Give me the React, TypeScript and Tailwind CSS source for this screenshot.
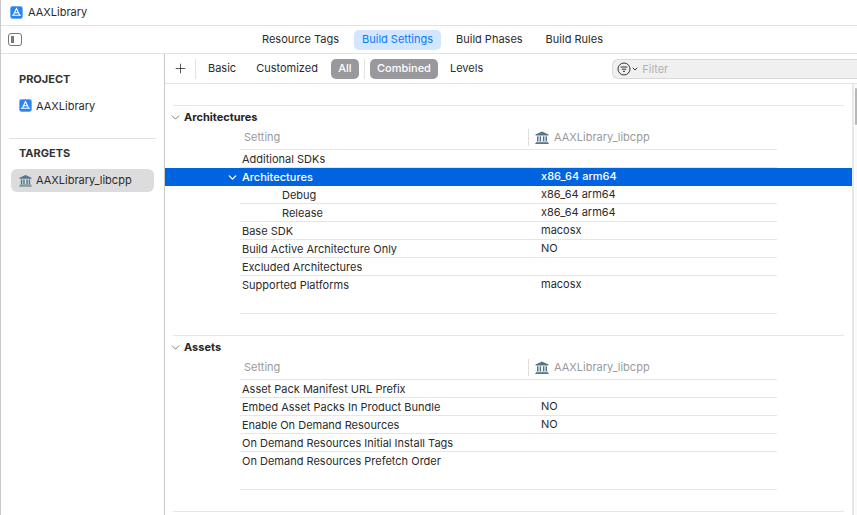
import { ChevronDown, Plus } from 'lucide-react';

const AppIcon = ({ className = '' }: { className?: string }) => (
  <svg viewBox="0 0 14 14" className={className}>
    <rect x="0.4" y="0.4" width="13.2" height="13.2" rx="2.6" fill="#2a83f0" stroke="#6fb2fb" strokeWidth="0.8" />
    <path d="M7 2.6 L3.6 10 M7 2.6 L10.4 10 M2.6 10 H11.4 M5.2 7.2 H8.8" stroke="#fff" strokeWidth="1.2" fill="none" strokeLinecap="round" />
  </svg>
);

const BankIcon = ({ className = '' }: { className?: string }) => (
  <svg viewBox="0 0 14 13" className={className} fill="#557689">
    <path d="M7 0.5 L13.5 3.6 V4.6 H0.5 V3.6 Z" />
    <rect x="2" y="5.3" width="1.5" height="5" />
    <rect x="4.6" y="5.3" width="1.5" height="5" />
    <rect x="7.9" y="5.3" width="1.5" height="5" />
    <rect x="10.5" y="5.3" width="1.5" height="5" />
    <rect x="1" y="10.8" width="12" height="1" />
    <rect x="0.3" y="12" width="13.4" height="1" />
  </svg>
);

interface Row {
  label: string;
  value?: string;
  indent?: boolean;
  selected?: boolean;
  last?: boolean;
}

const architectures: Row[] = [
  { label: 'Additional SDKs' },
  { label: 'Architectures', value: 'x86_64 arm64', selected: true },
  { label: 'Debug', value: 'x86_64 arm64', indent: true },
  { label: 'Release', value: 'x86_64 arm64', indent: true },
  { label: 'Base SDK', value: 'macosx' },
  { label: 'Build Active Architecture Only', value: 'NO' },
  { label: 'Excluded Architectures' },
  { label: 'Supported Platforms', value: 'macosx', last: true },
];

const assets: Row[] = [
  { label: 'Asset Pack Manifest URL Prefix' },
  { label: 'Embed Asset Packs In Product Bundle', value: 'NO' },
  { label: 'Enable On Demand Resources', value: 'NO' },
  { label: 'On Demand Resources Initial Install Tags' },
  { label: 'On Demand Resources Prefetch Order', last: true },
];

function SettingRow({ row }: { row: Row }) {
  if (row.selected) {
    return (
      <div className="flex h-[18px] items-center bg-[#0064e1] font-medium text-white">
        <div className="flex w-[75px] justify-end pr-[1px]">
          <ChevronDown className="h-[13px] w-[13px]" strokeWidth={2.5} />
        </div>
        <div className="w-[301px] pl-[2px]">{row.label}</div>
        <div className="mb-[2px]">{row.value}</div>
      </div>
    );
  }
  return (
    <div className={`ml-[75px] flex h-[18px] w-[537px] items-center border-b pt-[1px] text-[#2b2b2b] ${row.last ? 'border-transparent' : 'border-[#e6e6e6]'}`}>
      <div className={row.indent ? 'w-[301px] pl-[42px]' : 'w-[301px] pl-[2px]'}>{row.label}</div>
      <div className="mb-[2px]">{row.value}</div>
    </div>
  );
}

function Section({ title, rows }: { title: string; rows: Row[] }) {
  return (
    <section className="mb-[21px]">
      <div className="mx-[8px] flex h-[24px] items-center border-t border-[#e6e6e6]">
        <ChevronDown className="ml-[-4px] h-[13px] w-[13px] text-[#666666]" strokeWidth={1.6} />
        <span className="ml-[2px] font-bold text-[#262626]">{title}</span>
      </div>
      <div className="ml-[75px] flex h-[21px] w-[537px] items-start border-b border-[#e6e6e6] text-[#9a9a9a]">
        <div className="w-[288px] pl-[4px]">Setting</div>
        <div className="flex h-[17px] items-center gap-[5px] border-l border-[#dedede] pl-[6px]">
          <BankIcon className="h-[13px] w-[14px]" />
          <span>AAXLibrary_libcpp</span>
        </div>
      </div>
      {rows.map((row) => (
        <SettingRow key={row.label} row={row} />
      ))}
      <div className="ml-[75px] h-[20px] w-[537px] border-b border-[#e6e6e6]" />
    </section>
  );
}

export default function App() {
  return (
    <div className="flex h-[515px] w-[857px] flex-col overflow-hidden border-l border-[#c9c9c9] bg-white font-['Inter',sans-serif] text-[11px] text-[#2b2b2b]">
      <div className="flex h-[26px] shrink-0 items-center gap-[5px] border-b border-[#e2e2e2] pl-[9px]">
        <AppIcon className="h-[13px] w-[13px]" />
        <span>AAXLibrary</span>
      </div>

      <div className="flex h-[28px] shrink-0 items-center border-b border-[#e2e2e2]">
        <div className="ml-[7px] flex h-[13px] w-[14px] rounded-[3px] border border-[#777777]">
          <div className="ml-[2px] my-[2px] w-[3px] bg-[#777777]" />
        </div>
        <div className="ml-[233px] flex items-center gap-[8px]">
          <span className="px-[7px]">Resource Tags</span>
          <span className="flex h-[20px] w-[87px] items-center justify-center rounded-[5px] bg-[#d2e7ff] text-[#0a7aff]">Build Settings</span>
          <span className="px-[7px]">Build Phases</span>
          <span className="ml-[1px] px-[7px]">Build Rules</span>
        </div>
      </div>

      <div className="flex min-h-0 flex-1">
        <aside className="w-[164px] shrink-0 border-r border-[#c9c9c9] pt-[17px]">
          <div className="pl-[18px] font-bold text-[#333333]">PROJECT</div>
          <div className="mt-[10px] flex items-center gap-[4px] pl-[18px]">
            <AppIcon className="h-[13px] w-[13px]" />
            <span>AAXLibrary</span>
          </div>
          <div className="mx-[8px] mt-[24px] border-t border-[#e2e2e2]" />
          <div className="mt-[6px] pl-[18px] font-bold text-[#333333]">TARGETS</div>
          <div className="mx-[10px] mt-[7px] flex h-[23px] items-center gap-[4px] rounded-[6px] bg-[#dcdcdc] pl-[8px]">
            <BankIcon className="h-[13px] w-[13px]" />
            <span>AAXLibrary_libcpp</span>
          </div>
        </aside>

        <main className="flex min-w-0 flex-1 flex-col">
          <div className="flex h-[30px] shrink-0 items-center border-b border-[#e2e2e2] pt-[1px]">
            <Plus className="ml-[8px] mb-[2px] h-[15px] w-[15px] text-[#333333]" strokeWidth={1.3} />
            <div className="ml-[7px] h-[20px] border-l border-[#e2e2e2]" />
            <span className="ml-[12px] mb-[2px]">Basic</span>
            <span className="ml-[20px] mb-[2px]">Customized</span>
            <span className="ml-[13px] flex h-[20px] w-[28px] items-center justify-center rounded-[5px] bg-[#98989d] pb-[2px] font-medium text-white">All</span>
            <div className="ml-[5px] h-[20px] border-l border-[#e2e2e2]" />
            <span className="ml-[5px] flex h-[20px] w-[68px] items-center justify-center rounded-[5px] bg-[#98989d] pb-[2px] font-medium text-white">Combined</span>
            <span className="ml-[12px] mb-[2px]">Levels</span>
            <div className="ml-[129px] flex h-[20px] flex-1 items-center rounded-l-[6px] border border-r-0 border-[#d8d8d8] bg-[#f0f0f0] pl-[4px] text-[#b0b0b0]">
              <svg viewBox="0 0 14 14" className="h-[14px] w-[14px]" fill="none" stroke="#333333" strokeWidth="1">
                <circle cx="7" cy="7" r="6" />
                <path d="M3.6 5 H10.4 M4.8 7.2 H9.2 M6 9.4 H8" />
              </svg>
              <ChevronDown className="h-[8px] w-[8px] text-[#333333]" strokeWidth={3} />
              <span className="ml-[3px]">Filter</span>
            </div>
          </div>

          <div className="flex min-h-0 flex-1">
            <div className="min-w-0 flex-1 overflow-hidden pt-[21px]">
              <Section title="Architectures" rows={architectures} />
              <Section title="Assets" rows={assets} />
              <div className="mx-[8px] border-t border-[#e6e6e6]" />
            </div>
            <div className="w-[5px] shrink-0 border-l-2 border-[#e8e8e8] bg-[#fafafa] pl-[1px] pt-[4px]">
              <div className="h-[37px] w-[2px] rounded-full bg-[#b8b8b8]" />
            </div>
          </div>
        </main>
      </div>
    </div>
  );
}
